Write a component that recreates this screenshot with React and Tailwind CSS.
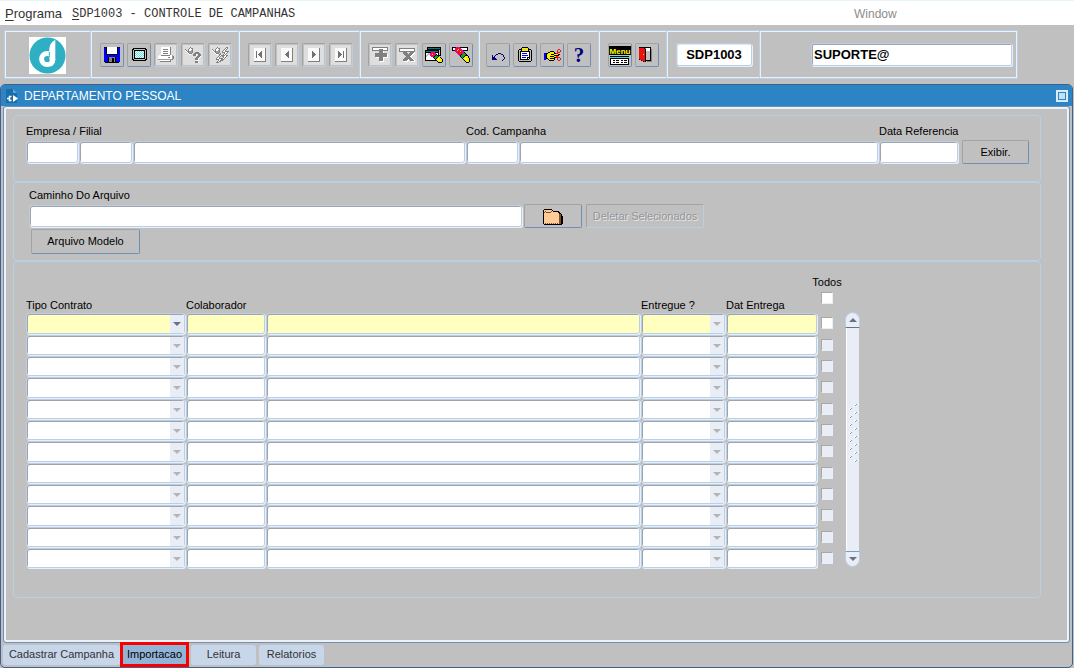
import React from "react";

const PALETTE = {
  K: "#000000", W: "#ffffff", B: "#0000f0", N: "#000080", G: "#808080", L: "#c0c0c0",
  D: "#9c9c9c", R: "#f01010", Y: "#f8f000", C: "#60e8e8", M: "#f000a0", E: "#00b020",
  T: "#007878", O: "#ffcc99", P: "#805020",
};

function Pixels({ rows, className = "" }) {
  const width = Math.max(...rows.map((row) => row.length));
  const cells = [];
  rows.forEach((row, y) => {
    let x = 0;
    while (x < row.length) {
      let end = x + 1;
      while (end < row.length && row[end] === row[x]) end += 1;
      if (row[x] !== ".") {
        cells.push(<rect key={`${x}-${y}`} x={x} y={y} width={end - x} height="1" fill={PALETTE[row[x]]} />);
      }
      x = end;
    }
  });
  return (
    <svg aria-hidden="true" width={width} height={rows.length} viewBox={`0 0 ${width} ${rows.length}`} shapeRendering="crispEdges" className={`shrink-0 ${className}`}>
      {cells}
    </svg>
  );
}

const SAVE = [
  "KBKWWWWWWWWWWKBK", "BBKWWWWWWWWWWKBB", "BBKWWWWWWWWWWKBB", "BBKWWWWWWWWWWKBB",
  "BBKWWWWWWWWWWKBB", "BBKWWWWWWWWWWKBB", "BBKWWWWWWWWWWKBB", "BBBKKKKKKKKKKBBB",
  "BBBBBBBBBBBBBBBB", "BBBBBBBBBBBBBBBB", "BBBBKGGGGGGKBBBB", "BBBBKGGGKKGKBBBB",
  "BBBBKGGGKKGKBBBB", "BBBBKGGGKKGKBBBB", "KBBBKGGGKKGKBBBB", ".KKKKKKKKKKKKKK.",
];
const SCREEN = [
  ".KKKKKKKKKKKKK.", "KKLLLLLLLLLLLKK", "KLKKKKKKKKKKKLK", "KLKCWCWCWCWCKLK", "KLKWCWCWCWCWKLK",
  "KLKCWCWCWCWCKLK", "KLKWCWCWCWCWKLK", "KLKCWCWCWCWCKLK", "KLKWCWCWCWCWKLK", "KLKCWCWCWCWCKLK",
  "KLKKKKKKKKKKKLK", "KKLLLLLLLLLLLKK", ".KKKKKKKKKKKKK.",
];
const PRINT = [
  "...WWWWWWWWWG...", "...WWWWWWWWWG...", "...WWGGGGGWWG...", "...WWWWWWWWWG...", "...WWGGGGGWWG...",
  "...WWWWWWWWWG...", "...WWGGGGGWWG...", "...WWWWWWWWWG...", ".WWGGGGGGGGGWWD.", "WWWWWWWWWWWWWWDG",
  "WWWWWWWWWWGGWWDG", "WWWWWWWWWWWWWWDG", "DDDDDDDDDDDDDDG.", "..WWWWWWWWWWG...", "..GGGGGGGGGGG...",
];
const QUERY = [
  ".....G..........", "....GWGG........", "G..GWWWG........", "WG.GWWDG........", ".WGGDDDG........",
  "..WGDDDG..GGGG..", "...WGGG..GGGGGG.", "....WW..GGGW.GGG", "........GGGW.GGG", "............GGGW",
  "...........GGGW.", "..........GGGW..", "..........GGGW..", "...........WWW..", "..........GGG...", "..........GGGW..",
];
const RUN = [
  ".....G........GG.", "....GWGG.....GWG.", "G..GWWWG....GWG..", "WG.GWWDG...GWG...", ".WGGDDDG..GWWGGGG",
  "..WGDDDG..GGGWWG.", "...WGGG.G...GWG..", "....WW.GG..GWG...", ".......GWGGGGWGG.", "......GWG.GGWWG..",
  ".....GWG...GWG...", "....GWWGGGGWG....", "....GGGWWGGG.....", "......GWGGG......", ".....GWGG........", "....GGG..........",
];
const INSERT = [
  "GGGGGGGGGGGGGGGG", "GWWWWWWWWWWWWWWG", "GWWWWWWGGGGWWWWG", "GGGGGGGGGGGGGGGG", ".......GGGGW....",
  ".......GGGGW....", "...GGGGGGGGGGGG.", "...GGGGGGGGGGGGW", "...GGGGGGGGGGGGW", "...GGGGGGGGGGGGW",
  "....WWWGGGGWWWWW", ".......GGGGW....", ".......GGGGW....", ".......GGGGW....", "........WWWW....",
];
const REMOVE = [
  "GGGGGGGGGGGGGGGG", "GWWWWWWWWWWWWWWG", "GWWWWWWWWWWWWWWG", "GGGGGGGGGGGGGGGG", "....GGGG...GGGGW",
  "....GGGGG.GGGGWW", ".....GGGGGGGGWW.", "......GGGGGGWW..", ".......GGGGWW...", "......GGGGGGW...",
  ".....GGGGGGGGW..", "....GGGGGWGGGGW.", "....GGGGWW.GGGGW", ".....WWWW...WWWW",
];
const CLEAR_BLOCK = [
  "..KKKKKKKKKKKKKK..", "..KTTTTTTTTTTTTK..", "..KKKKKKKKKKKKKK..", "KKKKKKKKKKKKKKLK..", "KTTTTTTTTTTTTKLK..",
  "KKKKKKMMMMKKKKLK..", "KWWLLMMRRMMWWKLK..", "KWLLLMRYRMMKWKLK..", "KLLWWMMRMMKEKKKK..", "KLWWWWMMMKEEEK....",
  "KWWWWWWWKEEEKYYK..", "KWWWWWWWWKEKYYYYK.", "KWWWWWWWWWKYYWYYYK", "KKKKKKKKKKKKYYWYYK", "............KYYYYK", ".............KKKK.",
];
const CLEAR_FIELD = [
  "KKKKMMMMKKKKKKKK..", "KWWMMRRMMWWWWWWK..", "KWWMRRYRMMWWWWWK..", "KKKMRYRRRMMKKKKK..", "...MMRRRYRMM......",
  "....MMRRRRMMK.....", ".....MMRRMMEEK....", "......MMMKEEEEK...", ".......MKEEEEKKK..", "........KEEEKYYYK.",
  ".........KEKYYYYK.", "..........KYYWYYYK", "...........KYYWYYK", "............KYYYYK", ".............KYYYK", "..............KKK.",
];
const UNDO = [
  "......NNN....", "....NN...NN..", "N..N.......N.", "N.N........N.", "NNN.........N", "NNNN........N", "NNNNN......N.", "..........N..",
];
const CLIPBOARD = [
  "....KKKKKK....", "...KYYYYYYK...", ".KKKYYLLYYKKK.", "KLLKYYYYYYKLLK", "KLKKKKKKKKKKLK", "KLKWWWWWWWWKLK", "KLKWBBBBBWWKLK",
  "KLKWWWWWWWWKLK", "KLKWBBBBBBWKLK", "KLKWWWWWWWWKLK", "KLKWBBBBWKKKLK", "KLKWWWWWWKWKLK", "KLKKKKKKKKKLLK", "KLLLLLLLLLLLLK", ".KKKKKKKKKKKK.",
];
const HAND = [
  "..............RR.", ".............R..R", "......KKKK...R..R", "....KKYYYYK..RRR.", "BBKKYYYYYYKKRR...", "BBKYYYYKKKYYYYKK.",
  "BBKYYYYYYYKKKKK..", "BBKYYYKKKKYYRR...", "BBKYYYYYYYKKRRRR.", "BBKKYYKKKKK..R..R", "BB..KYYYYYK..R..R", ".....KKKKK....RR.",
];
const DOOR = [
  "KKKKKKKKKKKK.", "RRRRRKGWWWWK.", "RRRRRRKWWWWKG", "RRRRRRKWWWWKG", "RRRRRRKLLLLKG", "RRRRRRKLLLLKG", "RRRRRRKLLLLKG", "RRRRYRKLLLLKG",
  "RRRRRRKLLLLKG", "RRRRRRKLLLLKG", "RRRRRRKLLLLKG", "RRRRRRKLLLLKG", "KRRRRRKLLLLKG", "..KRRRKKKKKKG", "....KRK.GGGGG",
];
const FOLDER = [
  ".KKKKKKKK...........", "KOOOOOOOOK..........", "KOPOOOOOPOKKKKKK....", "KPOPPPPPOOOOOOOKK...", "KOOOOOOOOOOOOOOOKK..",
  "KOOOOOOOOOOOOOOOPPK.", "KOOOOOOOOOOOOOOOPPK.", "KOOOOOOOOOOOOOOOPPKK", "KOOOOOOOOOOOOOOOPPKK", "KOOOOOOOOOOOOOOOPPKK",
  "KOOOOOOOOOOOOOOOPPKK", "KOOOOOOOOOOOOOOOPPKK", "KOOOOOOOOOOOOOOOPPKK", "KOOOOOOOOOOOOOOOPPKK", "KOPOPOPOPOPOPOPOPPKK", ".KKKKKKKKKKKKKKKKKK.",
];

function Nav({ d }) {
  return (
    <svg aria-hidden="true" width="14" height="15" viewBox="0 0 14 15" shapeRendering="crispEdges">
      <path d="M1 1H12V14H1Z" fill="#fafafa" />
      <path d="M12 1H13V15H1V14H12Z" fill="#808080" />
      <path d={d} fill="#707070" />
    </svg>
  );
}

function MenuGlyph() {
  return (
    <svg aria-hidden="true" width="22" height="20" viewBox="0 0 22 20" className="shrink-0">
      <path d="M0 1H22V10H0Z" fill="#000" shapeRendering="crispEdges" />
      <text x="11" y="9" textAnchor="middle" fontFamily="Liberation Sans, sans-serif" fontSize="8" fontWeight="bold" fill="#ffff00">Menu</text>
      <g shapeRendering="crispEdges">
        <path d="M1 11H20V20H1Z" fill="#000" />
        <path d="M1 12H20V13H1Z" fill="#40e0e0" />
        <path d="M2 14H19V19H2Z" fill="#fff" />
        <path d="M4 15H6V16H4ZM7 15H10V16H7ZM12 15H14V16H12ZM15 15H18V16H15ZM4 17H6V18H4ZM7 17H10V18H7ZM12 17H14V18H12ZM15 17H18V18H15Z" fill="#000" />
      </g>
    </svg>
  );
}

const TOOL_GROUPS = [
  {
    box: "w-[148px] pl-2",
    tools: [
      { label: "Salvar", icon: <Pixels rows={SAVE} /> },
      { label: "Tela", icon: <Pixels rows={SCREEN} /> },
      { label: "Imprimir", off: true, icon: <Pixels rows={PRINT} /> },
      { label: "Entrar consulta", off: true, icon: <Pixels rows={QUERY} /> },
      { label: "Executar consulta", off: true, icon: <Pixels rows={RUN} /> },
    ],
  },
  {
    box: "w-[121px] pl-2",
    tools: [
      { label: "Primeiro registro", off: true, icon: <Nav d="M3 4H4V11H3ZM5 7H6V6H7V5H8V4H9V11H8V10H7V9H6V8H5Z" /> },
      { label: "Registro anterior", off: true, icon: <Nav d="M5 7H6V6H7V5H8V4H9V11H8V10H7V9H6V8H5Z" /> },
      { label: "Proximo registro", off: true, icon: <Nav d="M9 7H8V6H7V5H6V4H5V11H6V10H7V9H8V8H9Z" /> },
      { label: "Ultimo registro", off: true, icon: <Nav d="M10 4H9V11H10ZM8 7H7V6H6V5H5V4H4V11H5V10H6V9H7V8H8Z" /> },
    ],
  },
  {
    box: "w-[119px] pl-[7px]",
    tools: [
      { label: "Inserir registro", off: true, icon: <Pixels rows={INSERT} /> },
      { label: "Remover registro", off: true, icon: <Pixels rows={REMOVE} /> },
      { label: "Limpar bloco", icon: <Pixels rows={CLEAR_BLOCK} /> },
      { label: "Limpar campo", icon: <Pixels rows={CLEAR_FIELD} /> },
    ],
  },
  {
    box: "w-[120px] pl-1.5",
    tools: [
      { label: "Desfazer", icon: <Pixels rows={UNDO} className="mt-1" /> },
      { label: "Colar", icon: <Pixels rows={CLIPBOARD} /> },
      { label: "Recortar", icon: <Pixels rows={HAND} /> },
      { label: "Ajuda", icon: <span className="font-['Liberation_Serif',serif] text-[21px] leading-[22px] font-bold text-[#000080]">?</span> },
    ],
  },
  {
    box: "w-[68px] pl-2",
    tools: [
      { label: "Menu", icon: <MenuGlyph /> },
      { label: "Sair", icon: <Pixels rows={DOOR} className="mr-1" /> },
    ],
  },
];

const RAISED = "rounded-[2px] border border-t-[#a3a3a3] border-l-[#a3a3a3] ";
const ON = "border-r-[#6f8fb5] border-b-[#6f8fb5] ";
const OFF = "border-r-[#b8cfe5] border-b-[#b8cfe5] ";
const FIELD = "block w-full min-w-0 rounded-[3px] border border-[#b8cfe5] shadow-[inset_1px_1px_0_#a0a4aa,1px_1px_0_#e9eff8] outline-none px-1 text-[11px] ";
const DIVIDER = "border-r border-[#e9f1fa] shadow-[inset_-1px_0_0_#b8cfe5] ";

function Logo() {
  return (
    <svg role="img" aria-label="Logo" width="37" height="37" viewBox="0 0 37 37">
      <rect width="37" height="37" fill="#fff" />
      <circle cx="18.5" cy="18.5" r="18" fill="#2fafc3" />
      <circle cx="18.2" cy="22" r="5.6" fill="none" stroke="#fff" strokeWidth="5" />
      <path d="M26.3 3C22.5 4.500 20 8.500 20.300 14.500V20.500L21.500 29.500C25 28.500 26.300 25.500 26.300 22Z" fill="#fff" />
      <path d="M20.300 15V20" stroke="#2fafc3" strokeWidth="1" />
    </svg>
  );
}

function Toolbar() {
  return (
    <div role="toolbar" aria-label="Ferramentas" className="mt-[5px] mr-14 ml-1 flex h-[49px] items-stretch border border-[#b8cfe5] shadow-[inset_1px_1px_0_#e9f1fa,inset_-1px_-1px_0_#e9f1fa]">
      <div className={DIVIDER + "flex w-[87px] shrink-0 items-center pt-0.5 pl-6"}><Logo /></div>
      {TOOL_GROUPS.map((group) => (
        <div key={group.tools[0].label} className={DIVIDER + "flex shrink-0 items-center gap-[3px] " + group.box}>
          {group.tools.map((tool) => (
            <button key={tool.label} type="button" aria-label={tool.label} disabled={tool.off}
              className={RAISED + "flex size-6 items-center justify-center " + (tool.off ? OFF + "bg-[#dedede] shadow-[inset_0_0_0_1px_#c0c0c0]" : ON)}>
              {tool.icon}
            </button>
          ))}
        </div>
      ))}
      <div className={DIVIDER + "flex w-[93px] shrink-0 items-center px-2"}>
        <input aria-label="Programa" readOnly defaultValue="SDP1003" className="h-[23px] w-full rounded-[3px] border border-[#b8cfe5] bg-white text-center text-[13px] font-bold shadow-[inset_1px_1px_0_#e0e6ee,1px_1px_0_#e9eff8] outline-none" />
      </div>
      <div className="flex min-w-0 flex-1 items-center pr-[5px] pl-[50px]">
        <input aria-label="Usuario" readOnly defaultValue="SUPORTE@" className="h-[23px] w-full min-w-0 rounded-[2px] border border-[#b8cfe5] bg-white px-0.5 text-[13px] font-bold shadow-[inset_1px_1px_0_#a0a4aa,1px_1px_0_#e9eff8] outline-none" />
      </div>
    </div>
  );
}

function Header() {
  return (
    <section className="rounded-[4px] border border-[#b8cfe5] pt-[7px] pr-[11px] pb-[17px] pl-3">
      <div className="grid grid-cols-[53px_54px_333fr_53px_360fr_80px_70px] items-center gap-y-px">
        <label htmlFor="empresa" className="col-span-3 h-4 leading-4">Empresa / Filial</label>
        <label htmlFor="campanha" className="col-span-2 h-4 leading-4">Cod. Campanha</label>
        <label htmlFor="data" className="col-span-2 h-4 leading-4">Data Referencia</label>
        <div className="pr-px"><input id="empresa" className={FIELD + "h-[22px] bg-white"} /></div>
        <div className="pr-px"><input aria-label="Filial" className={FIELD + "h-[22px] bg-white"} /></div>
        <div className="pr-px"><input aria-label="Nome da filial" className={FIELD + "h-[22px] bg-white"} /></div>
        <div className="pr-px"><input id="campanha" className={FIELD + "h-[22px] bg-white"} /></div>
        <div className="pr-px"><input aria-label="Nome da campanha" className={FIELD + "h-[22px] bg-white"} /></div>
        <div className="pr-px"><input id="data" className={FIELD + "h-[22px] bg-white"} /></div>
        <div className="pl-[3px]"><button type="button" className={RAISED + ON + "h-6 w-full"}>Exibir.</button></div>
      </div>
    </section>
  );
}

function FileSection() {
  return (
    <section className="rounded-[4px] border border-[#b8cfe5] pt-1 pr-3 pb-1.5 pl-[15px]">
      <label htmlFor="arquivo" className="block h-4 leading-4">Caminho Do Arquivo</label>
      <div className="mt-px flex items-center">
        <input id="arquivo" className={FIELD + "h-[22px] max-w-[493px] bg-white"} />
        <button type="button" aria-label="Procurar arquivo" className={RAISED + ON + "ml-0.5 flex h-6 w-[58px] shrink-0 items-center justify-center pt-0.5"}><Pixels rows={FOLDER} /></button>
        <button type="button" disabled className={RAISED + OFF + "ml-1 h-6 w-[118px] shrink-0 text-[#959595] [text-shadow:1px_1px_0_#e4e8ee]"}>Deletar Selecionados</button>
      </div>
      <button type="button" className={RAISED + ON + "mt-px ml-0.5 block h-[25px] w-[109px]"}>Arquivo Modelo</button>
    </section>
  );
}

function Check({ label, off }) {
  return (
    <input type="checkbox" aria-label={label} disabled={off}
      className={"block size-3 appearance-none border border-t-[#a8a8a8] border-r-[#e9eff8] border-b-[#e9eff8] border-l-[#a8a8a8] checked:bg-[#6382bf] " + (off ? "bg-[#e9edf5]" : "bg-white")} />
  );
}

function Choice({ label, active, off }) {
  const tone = active ? "bg-[#ffffc0] " : "bg-white ";
  return (
    <div className="relative h-full">
      <select aria-label={label} disabled={off} className={FIELD + tone + "h-full appearance-none opacity-100"}>
        <option value="" />
      </select>
      <span className="pointer-events-none absolute top-0.5 right-px bottom-px flex w-3.5 items-center justify-center bg-[#e9edf5]">
        <svg aria-hidden="true" width="8" height="4" viewBox="0 0 8 4"><path d="M0 0H8L4 4Z" fill={off ? "#b4b4b8" : "#6a7288"} /></svg>
      </span>
    </div>
  );
}

function Grid() {
  const rows = Array.from({ length: 12 }, (_, i) => i + 1);
  return (
    <section className="rounded-[4px] border border-[#b8cfe5] pt-3 pr-[180px] pb-7 pl-3">
      <div className="flex items-end">
        <div className="min-w-0 flex-1">
          <table id="registros" className="w-full table-fixed border-collapse">
            <colgroup>
              <col className="w-[160px]" /><col className="w-20" /><col /><col className="w-[85px]" /><col className="w-[91px]" /><col className="w-5" />
            </colgroup>
            <thead>
              <tr className="h-[39px] text-left align-bottom">
                <th className="p-0 font-normal"><span className="block h-[15px] leading-[15px]">Tipo Contrato</span></th>
                <th className="p-0 font-normal" colSpan="2"><span className="block h-[15px] leading-[15px]">Colaborador</span></th>
                <th className="p-0 font-normal"><span className="block h-[15px] leading-[15px]">Entregue ?</span></th>
                <th className="p-0 font-normal"><span className="block h-[15px] leading-[15px]">Dat Entrega</span></th>
                <th className="p-0 pb-[9px] font-normal">
                  <div className="flex flex-col items-center gap-0.5"><span className="h-4 leading-4">Todos</span><Check label="Todos" /></div>
                </th>
              </tr>
            </thead>
            <tbody>
              {rows.map((n) => {
                const active = n === 1;
                const tone = active ? "bg-[#ffffc0] " : "bg-white ";
                const tall = n % 3 === 1;
                const size = tall ? "h-[21px]" : "h-5";
                return (
                  <tr key={n} className={tall ? "h-[22px]" : "h-[21px]"}>
                    <td className="p-0 pr-px pb-px"><div className={size}><Choice label={`Tipo Contrato ${n}`} active={active} off={!active} /></div></td>
                    <td className="p-0 pr-px pb-px"><input aria-label={`Colaborador ${n}`} className={FIELD + tone + size} /></td>
                    <td className="p-0 pr-px pb-px"><input aria-label={`Nome ${n}`} className={FIELD + tone + size} /></td>
                    <td className="p-0 pr-px pb-px"><div className={size}><Choice label={`Entregue ${n}`} active={active} off /></div></td>
                    <td className="p-0 pb-px"><input aria-label={`Dat Entrega ${n}`} className={FIELD + tone + size} /></td>
                    <td className="p-0 pb-0.5 pl-1"><Check label={`Selecionar ${n}`} off={!active} /></td>
                  </tr>
                );
              })}
            </tbody>
          </table>
        </div>
        <div role="scrollbar" aria-controls="registros" aria-valuenow={0} aria-orientation="vertical" className="mb-0.5 ml-2 flex h-[255px] w-[15px] flex-col items-center">
          <button type="button" aria-label="Subir" className="flex h-4 w-full items-center justify-center rounded-t-full border border-[#b8cfe5] border-b-[#6a7288] bg-[#e9edf5]">
            <svg aria-hidden="true" width="8" height="4" viewBox="0 0 8 4"><path d="M4 0L8 4H0Z" fill="#6a7288" /></svg>
          </button>
          <div className="flex w-[13px] flex-1 justify-center border-l border-white bg-[#e9edf5]">
            <svg aria-hidden="true" width="8" height="58" viewBox="0 0 8 58" shapeRendering="crispEdges" className="mt-[76px]">
              {[0, 1, 2, 3, 4, 5, 6, 7].map((i) => (
                <g key={i}>
                  <path d={`M5 ${i * 8}h2v1h-1v1h-1z`} fill="#fff" /><path d={`M7 ${i * 8}h1v1h-1zM6 ${i * 8 + 1}h1v1h-1z`} fill="#7f9cc0" />
                  {i < 7 && <><path d={`M0 ${i * 8 + 4}h2v1h-1v1h-1z`} fill="#fff" /><path d={`M2 ${i * 8 + 4}h1v1h-1zM1 ${i * 8 + 5}h1v1h-1z`} fill="#7f9cc0" /></>}
                </g>
              ))}
            </svg>
          </div>
          <button type="button" aria-label="Descer" className="flex h-4 w-full items-center justify-center rounded-b-full border border-[#b8cfe5] border-t-[#7f9cc0] bg-[#e9edf5]">
            <svg aria-hidden="true" width="8" height="4" viewBox="0 0 8 4"><path d="M0 0H8L4 4Z" fill="#6a7288" /></svg>
          </button>
        </div>
      </div>
    </section>
  );
}

export default function App() {
  return (
    <div className="flex min-h-screen flex-col bg-[#c0c0c0] font-['Liberation_Sans',Arial,sans-serif] text-[11px] text-black">
      <nav className="flex h-[25px] items-center border-t border-[#e6f6f8] bg-white pt-px pl-[5px] text-[12px] text-[#333]">
        <button type="button" className="w-[67px] text-left text-[13px]"><u className="underline-offset-2">P</u>rograma</button>
        <button type="button" className="w-[782px] text-left font-['Liberation_Mono',monospace]"><u className="underline-offset-2">S</u>DP1003 - CONTROLE DE CAMPANHAS</button>
        <button type="button" className="text-[#8c8c8c]">Window</button>
      </nav>
      <Toolbar />
      <main className="mt-[5px] mr-px flex flex-1 flex-col rounded-[5px] border border-[#40608f] pb-px">
        <header className="flex h-[21px] shrink-0 items-center rounded-t-[4px] bg-[#2c84c4] pr-1 pl-1 text-white">
          <svg aria-hidden="true" width="15" height="16" viewBox="0 0 15 16">
            <path d="M1 1H8L12 5V15H1Z" fill="#1c6ca8" /><path d="M8 1V5H12Z" fill="#5ca8dc" />
            <path d="M8 7L13 10.500L8 14Z" fill="#fff" /><path d="M6.500 8.500H4.500V12.500H6.500M2 10.500H4.500" fill="none" stroke="#fff" strokeWidth="1.500" />
          </svg>
          <h1 className="ml-1 flex-1 text-[12px]">DEPARTAMENTO PESSOAL</h1>
          <button type="button" aria-label="Restaurar" className="flex size-3 items-center justify-center bg-[#d8ebf8]">
            <span className="block size-2 border border-[#2c84c4] bg-[#c4e0f4]" />
          </button>
        </header>
        <div className="mr-0.5 ml-0.5 flex-1 rounded-[3px] border border-[#6f8fb5] shadow-[inset_0_0_0_2px_#edf1f8]">
          <div className="pt-2 pr-[28px] pb-9 pl-[9px]">
            <Header />
            <FileSection />
            <Grid />
          </div>
        </div>
        <div role="tablist" className="ml-0.5 flex h-[23px] items-center text-[#333]">
          <button type="button" role="tab" aria-selected="false" className="h-5 w-[117px] rounded-[3px] bg-[#c8d6ea]">Cadastrar Campanha</button>
          <button type="button" role="tab" aria-selected="true" className="h-[25px] w-[69px] border-3 border-[#f80000] bg-[#92b4d6] text-black">Importacao</button>
          <button type="button" role="tab" aria-selected="false" className="ml-0.5 h-5 w-[65px] rounded-[3px] bg-[#c8d6ea]">Leitura</button>
          <button type="button" role="tab" aria-selected="false" className="ml-[3px] h-5 w-[65px] rounded-[3px] bg-[#c8d6ea]">Relatorios</button>
        </div>
      </main>
    </div>
  );
}
